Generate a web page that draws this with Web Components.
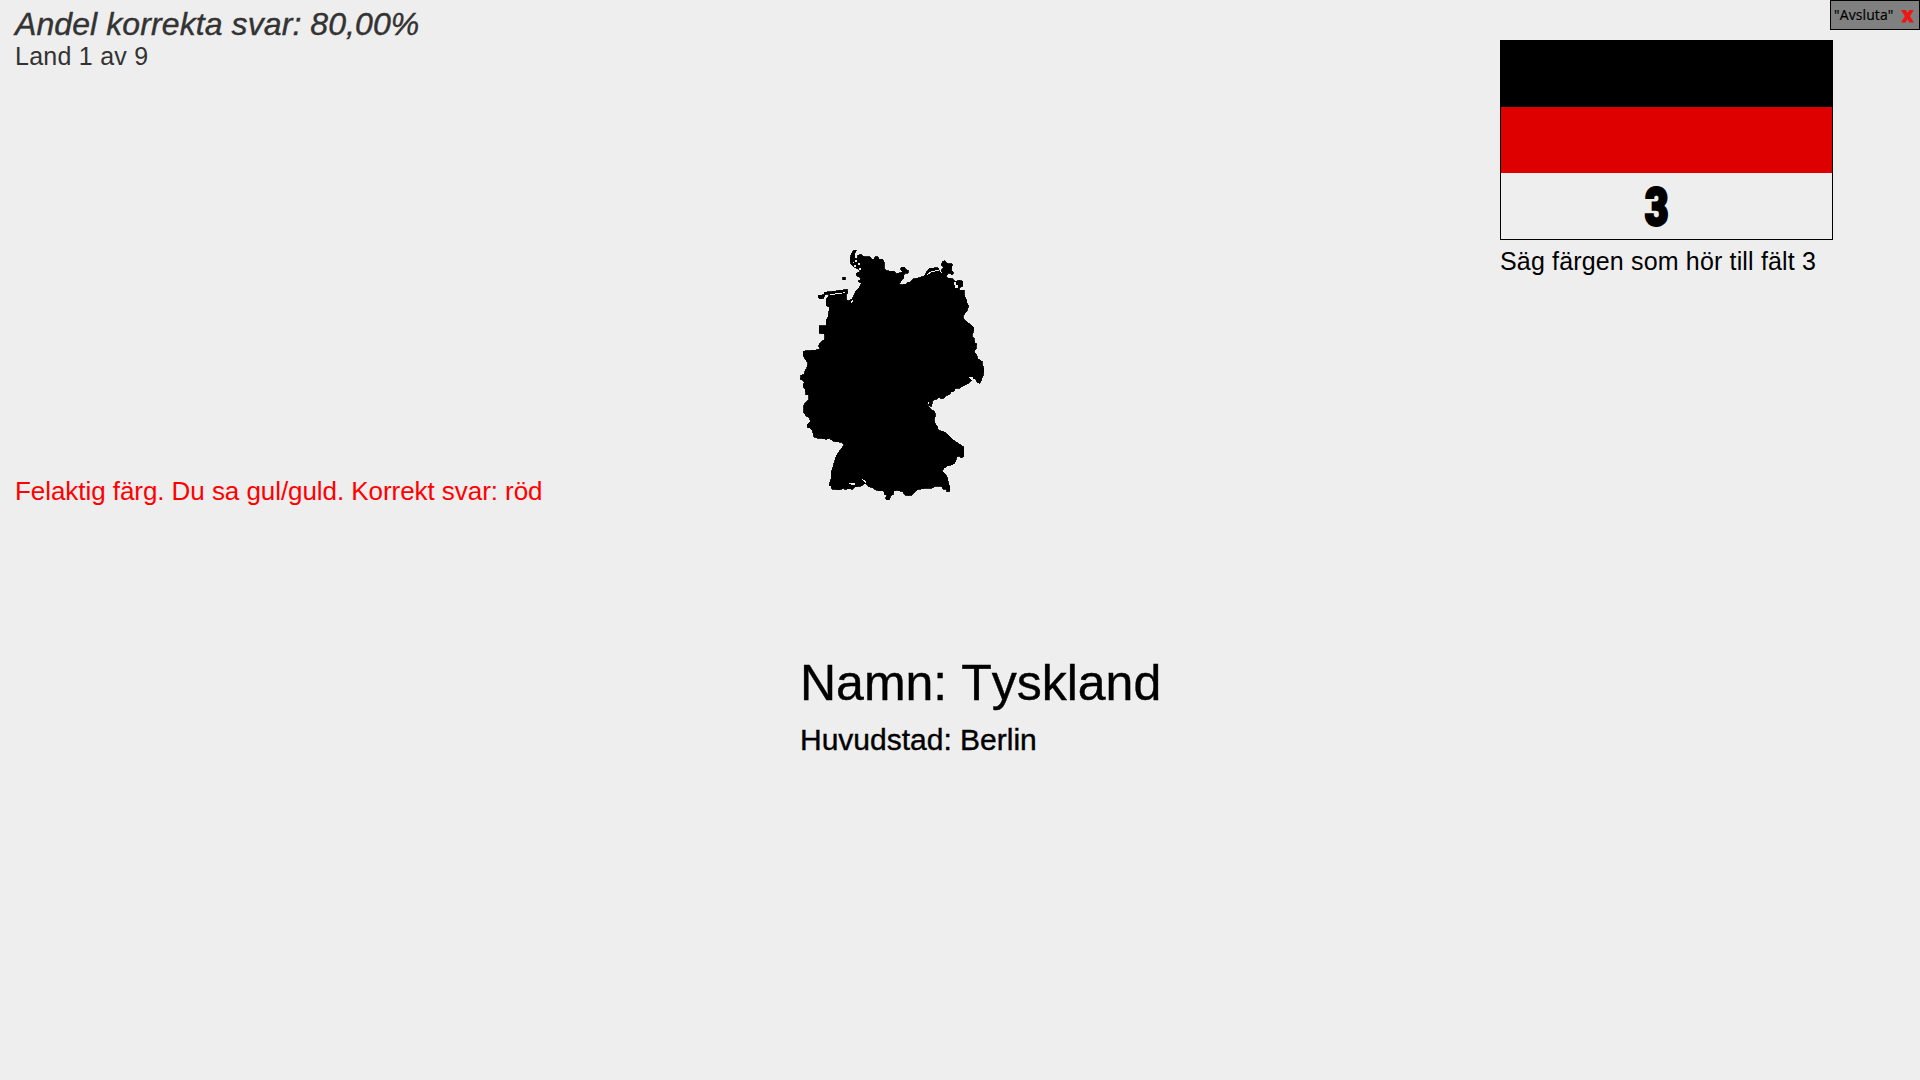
<!DOCTYPE html>
<html lang="sv">
<head>
<meta charset="utf-8">
<title>Flaggquiz</title>
<style>
html,body{margin:0;height:100%;background:#eee;overflow:hidden}
</style>
</head>
<body>
<quiz-app></quiz-app>
<script>
const make = (name, html) => customElements.define(name, class extends HTMLElement {
  constructor() {
    super();
    const t = document.createElement('template');
    t.innerHTML = html;
    this.attachShadow({mode: 'open'}).append(t.content.cloneNode(true));
  }
});

make('quiz-score', `
<style>
:host{display:flex;flex-direction:column;color:#333;white-space:nowrap}
.share{font-size:32px;line-height:40px;font-style:italic;letter-spacing:.09px;-webkit-text-stroke:.4px #333}
.step{font-size:25px;line-height:24px;letter-spacing:.25px}
</style>
<div class="share"><slot name="share"></slot></div>
<div class="step"><slot name="step"></slot></div>`);

make('quiz-feedback', `
<style>:host{display:block;color:#f00;font-size:26px;line-height:30px;letter-spacing:-.06px;white-space:nowrap}</style>
<slot></slot>`);

make('country-shape', `
<style>:host{display:block;width:200px;height:265px}svg{display:block}</style>
<svg width="200" height="265" viewBox="0 0 600 795" shape-rendering="crispEdges" role="img">
<g stroke="#000" stroke-width="2.500">
<path d="M203 46L213 44L222 50L240 50L245 58L252 58L255 50L263 50L268 57L278 57L282 66L282 87L290 92L303 94L312 94L318 101L331 98L337 95L332 89L334 82L344 82L349 90L356 92L354 99L343 99L341 113L334 124L327 130L330 134L349 133L352 127L360 127L364 123L370 117L390 113L403 107L410 95L418 85L445 83L448 93L455 100L463 105L474 114L487 116L496 124L508 121L518 124L519 138L504 147L513 151L522 151L524 168L530 181L531 190L536 196L531 213L520 226L520 236L533 247L543 255L551 263L551 272L546 288L553 296L554 308L560 312L558 326L553 335L560 345L564 357L576 364L577 375L582 386L580 404L574 420L569 430L562 428L555 415L544 422L532 432L515 440L510 444L496 445L493 454L483 456L478 464L468 466L463 474L454 476L448 472L441 477L428 481L425 499L419 499L413 490L412 493L423 508L433 513L437 525L433 537L434 548L442 560L446 571L462 575L472 583L478 588L490 600L501 608L510 614L521 620L522 650L514 653L507 648L500 651L497 665L490 673L472 678L462 685L456 693L466 702L472 712L475 729L480 741L479 754L471 755L470 748L460 748L455 738L437 738L426 744L412 744L386 748L377 753L366 765L356 767L345 765L337 755L322 751L312 752L309 764L302 767L299 778L289 780L287 772L292 767L283 762L281 752L267 752L255 749L248 743L235 740L229 731L222 731L214 739L195 740L188 748L177 746L165 748L160 745L150 749L125 748L124 739L117 736L123 716L123 699L128 684L134 663L140 645L150 631L163 614L154 607L130 604L119 595L109 598L100 596L82 594L72 591L68 574L62 565L52 562L52 553L62 544L58 533L48 528L41 517L41 496L49 485L57 478L56 465L47 464L46 450L39 438L43 425L31 417L33 406L43 403L45 393L50 385L54 369L47 360L39 344L40 334L52 332L72 331L91 327L85 318L93 306L104 298L105 283L87 279L87 258L108 257L108 241L114 231L119 202L108 196L108 178L119 163L106 163L103 168L101 175L89 176L84 172L85 166L105 164L102 157L131 154L171 148L174 158L169 163L168 176L175 183L185 177L190 171L197 153L208 142L214 130L204 124L214 116L200 107L198 100L212 94L205 87L192 81L183 73L180 56L184 41L192 30L199 31L194 42L194 52L202 59Z"/>
<path d="M457 65L466 62L471 70L487 72L484 89L491 99L486 105L476 98L470 108L460 103L453 92L460 83L454 74ZM158 112h8v7h-8z"/>
</g>
<path fill="#eee" d="M195 61h5v5h-5zM188 66h5v4h-5zM205 70h6v5h-6zM192 76h6v5h-6zM207 84h6v7h-6zM120 162L150 159L166 156L166 159L147 162L120 165ZM173 174h4v6h-4zM183 184l7-7v6l-7 6zM493 127h4v9h6v8h-8v-8h-5zM183 728l11 1v7h-6l-5-3h-9zM216 715l14 12-3 2-13-11zM537 412l12 0 3 9-6 1zM413 487h5v5h-5z"/>
<path fill="none" stroke="#eee" stroke-width="3" d="M411 104L417 100L425 94L448 92"/>
</svg>`);

make('country-facts', `
<style>
:host{display:flex;flex-direction:column;color:#000;white-space:nowrap}
.name{font-size:50px;line-height:56px;-webkit-text-stroke:.4px #000}
.capital{font-size:30px;line-height:34px;margin-top:12px;-webkit-text-stroke:.4px #000}
</style>
<div class="name"><slot name="name"></slot></div>
<div class="capital"><slot name="capital"></slot></div>`);

make('flag-card', `
<style>
:host{display:flex;flex-direction:column;width:333px;color:#000}
.flag{box-sizing:border-box;height:200px;border:1px solid #000;display:grid;grid-template-rows:66px 66px 66px}
.a{background:#000}.b{background:#de0000}
.c{display:flex;align-items:center;justify-content:center;padding:4px 20px 0 0;box-sizing:border-box}
.n{font:900 51px/62px Roboto,sans-serif;-webkit-text-stroke:3px #000;transform:scaleX(.79)}
.ask{font-size:25px;line-height:30px;margin-top:6px;white-space:nowrap;letter-spacing:.16px}
</style>
<div class="flag"><div class="a"></div><div class="b"></div><div class="c"><span class="n"><slot name="field"></slot></span></div></div>
<div class="ask"><slot></slot></div>`);

make('exit-button', `
<style>
:host{box-sizing:border-box;display:flex;align-items:center;width:90px;height:30px;border:1px solid #000;background:#808080;color:#000;padding-left:3px;font:14px/28px "Open Sans",sans-serif;letter-spacing:.1px;-webkit-text-stroke:.2px #000;white-space:nowrap}
svg{display:block;margin:2px 5px 0 auto}
</style>
<slot></slot>
<svg width="13" height="13" viewBox="0 0 13 13"><path fill="#f01414" d="M0 0H5L6.600 3.300L8.300 0H12.800L9 6.200L13 12.500H8.300L6.400 9L4.600 12.500H0L3.900 6.200Z"/></svg>`);

make('quiz-app', `
<style>
:host{display:grid;grid-template-columns:800px 700px 420px;width:1920px;height:1080px;background:#eee;font-family:"Liberation Sans",Arial,sans-serif;font-kerning:none}
.left{padding:4px 0 0 15px}
quiz-feedback{margin-top:408px}
country-shape{margin:240px 0 0 -10px}
country-facts{margin-top:150px}
.right{display:flex;flex-direction:column}
exit-button{align-self:flex-end}
flag-card{margin-top:10px}
</style>
<div class="left">
<quiz-score><span slot="share">Andel korrekta svar: 80,00%</span><span slot="step">Land 1 av 9</span></quiz-score>
<quiz-feedback>Felaktig färg. Du sa gul/guld. Korrekt svar: röd</quiz-feedback>
</div>
<div class="mid">
<country-shape></country-shape>
<country-facts><span slot="name">Namn: Tyskland</span><span slot="capital">Huvudstad: Berlin</span></country-facts>
</div>
<div class="right">
<exit-button>"Avsluta"</exit-button>
<flag-card><span slot="field">3</span>Säg färgen som hör till fält 3</flag-card>
</div>`);
</script>
</body>
</html>
